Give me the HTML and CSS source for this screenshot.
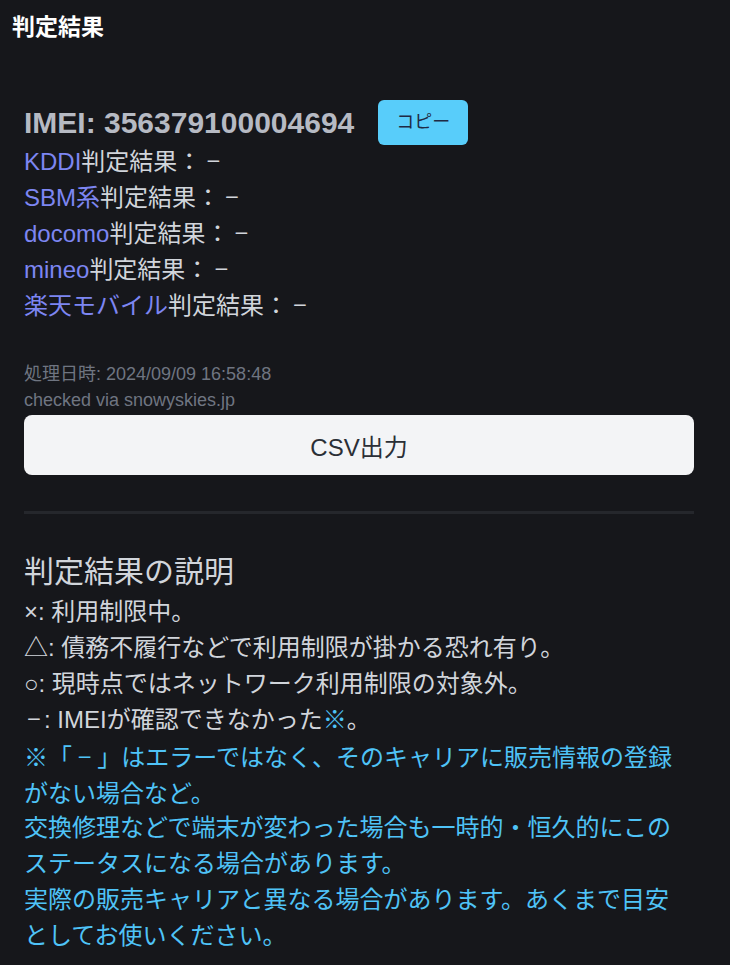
FILE: index.html
```html
<!DOCTYPE html>
<html lang="ja">
<head>
<meta charset="utf-8">
<title>判定結果</title>
<link rel="stylesheet" href="styles.css">
</head>
<body>
<header class="topbar">判定結果</header>
<main class="content">
  <div class="imei-row">
    <h2 class="imei">IMEI: 356379100004694</h2>
    <button class="copy-btn">コピー</button>
  </div>
  <ul class="results">
    <li><span class="carrier">KDDI</span>判定結果：<span class="dash">−</span></li>
    <li><span class="carrier">SBM系</span>判定結果：<span class="dash">−</span></li>
    <li><span class="carrier">docomo</span>判定結果：<span class="dash">−</span></li>
    <li><span class="carrier">mineo</span>判定結果：<span class="dash">−</span></li>
    <li><span class="carrier">楽天モバイル</span>判定結果：<span class="dash">−</span></li>
  </ul>
  <div class="meta">
    <p>処理日時: 2024/09/09 16:58:48</p>
    <p>checked via snowyskies.jp</p>
  </div>
  <button class="csv-btn">CSV出力</button>
  <hr class="divider">
  <section class="legend">
    <h3 class="legend-title">判定結果の説明</h3>
    <p>×: 利用制限中。</p>
    <p>△: 債務不履行などで利用制限が掛かる恐れ有り。</p>
    <p>○: 現時点ではネットワーク利用制限の対象外。</p>
    <p><span class="dash-lead">−</span>: IMEIが確認できなかった<span class="note">※</span>。</p>
    <p class="note cjk">※「<span class="dash-mid">−</span>」はエラーではなく、そのキャリアに販売情報の登録がない場合など。</p>
    <p class="note">交換修理などで端末が変わった場合も一時的・恒久的にこのステータスになる場合があります。</p>
    <p class="note">実際の販売キャリアと異なる場合があります。あくまで目安としてお使いください。</p>
  </section>
</main>
</body>
</html>
```
FILE: styles.css
```css
* { box-sizing: border-box; }
html, body {
  margin: 0;
  padding: 0;
  background: #16171b;
}
body {
  font-family: "Liberation Sans", "Noto Sans CJK JP", sans-serif;
  color: #d1d5db;
  font-size: 24px;
  line-height: 1.5;
}
.topbar {
  padding: 12px 12px 0;
  font-size: 23px;
  line-height: 30px;
  font-weight: 700;
  color: #ffffff;
}
.content {
  padding: 58px 36px 24px 24px;
}
.imei-row {
  display: flex;
  align-items: center;
  gap: 24px;
  height: 45px;
}
.imei {
  margin: 0;
  font-size: 30px;
  line-height: 40px;
  font-weight: 700;
  color: #b6bac3;
}
.copy-btn {
  font-family: "Liberation Sans", "Noto Sans CJK JP", sans-serif;
  font-size: 18px;
  line-height: 27px;
  padding: 9px 18px;
  border: none;
  border-radius: 6px;
  background: #58cdfa;
  color: #1f2a44;
}
.results {
  list-style: none;
  margin: -1px 0 0;
  padding: 0;
}
.results li {
  line-height: 36px;
}
.carrier {
  color: #7d86f2;
}
.dash {
  display: inline-block;
  width: 24px;
  line-height: 1;
  text-align: center;
  font-family: "Noto Sans CJK JP", sans-serif;
}
.dash-lead {
  display: inline-block;
  width: 20px;
  line-height: 1;
  text-align: center;
  font-family: "Noto Sans CJK JP", sans-serif;
}
.dash-mid {
  padding: 0 6px;
}
.meta {
  margin-top: 37px;
  font-size: 18px;
  line-height: 26px;
  color: #6f7581;
}
.meta p { margin: 0; }
.csv-btn {
  display: block;
  width: 100%;
  height: 60px;
  margin-top: 2px;
  border: none;
  border-radius: 8px;
  background: #f3f4f6;
  color: #2b2f36;
  font-family: "Liberation Sans", "Noto Sans CJK JP", sans-serif;
  font-size: 24px;
}
.divider {
  margin: 36px 0 0;
  border: none;
  height: 3px;
  background: #25272c;
}
.legend {
  margin-top: 35px;
  padding-right: 4px;
}
.legend-title {
  margin: 0;
  font-size: 30px;
  line-height: 45px;
  font-weight: 400;
  color: #d1d5db;
}
.legend p {
  margin: 0;
  line-height: 36px;
}
.legend .note, .note {
  color: #4fc3f7;
}
.legend .cjk {
  font-family: "Noto Sans CJK JP", sans-serif;
}
```
